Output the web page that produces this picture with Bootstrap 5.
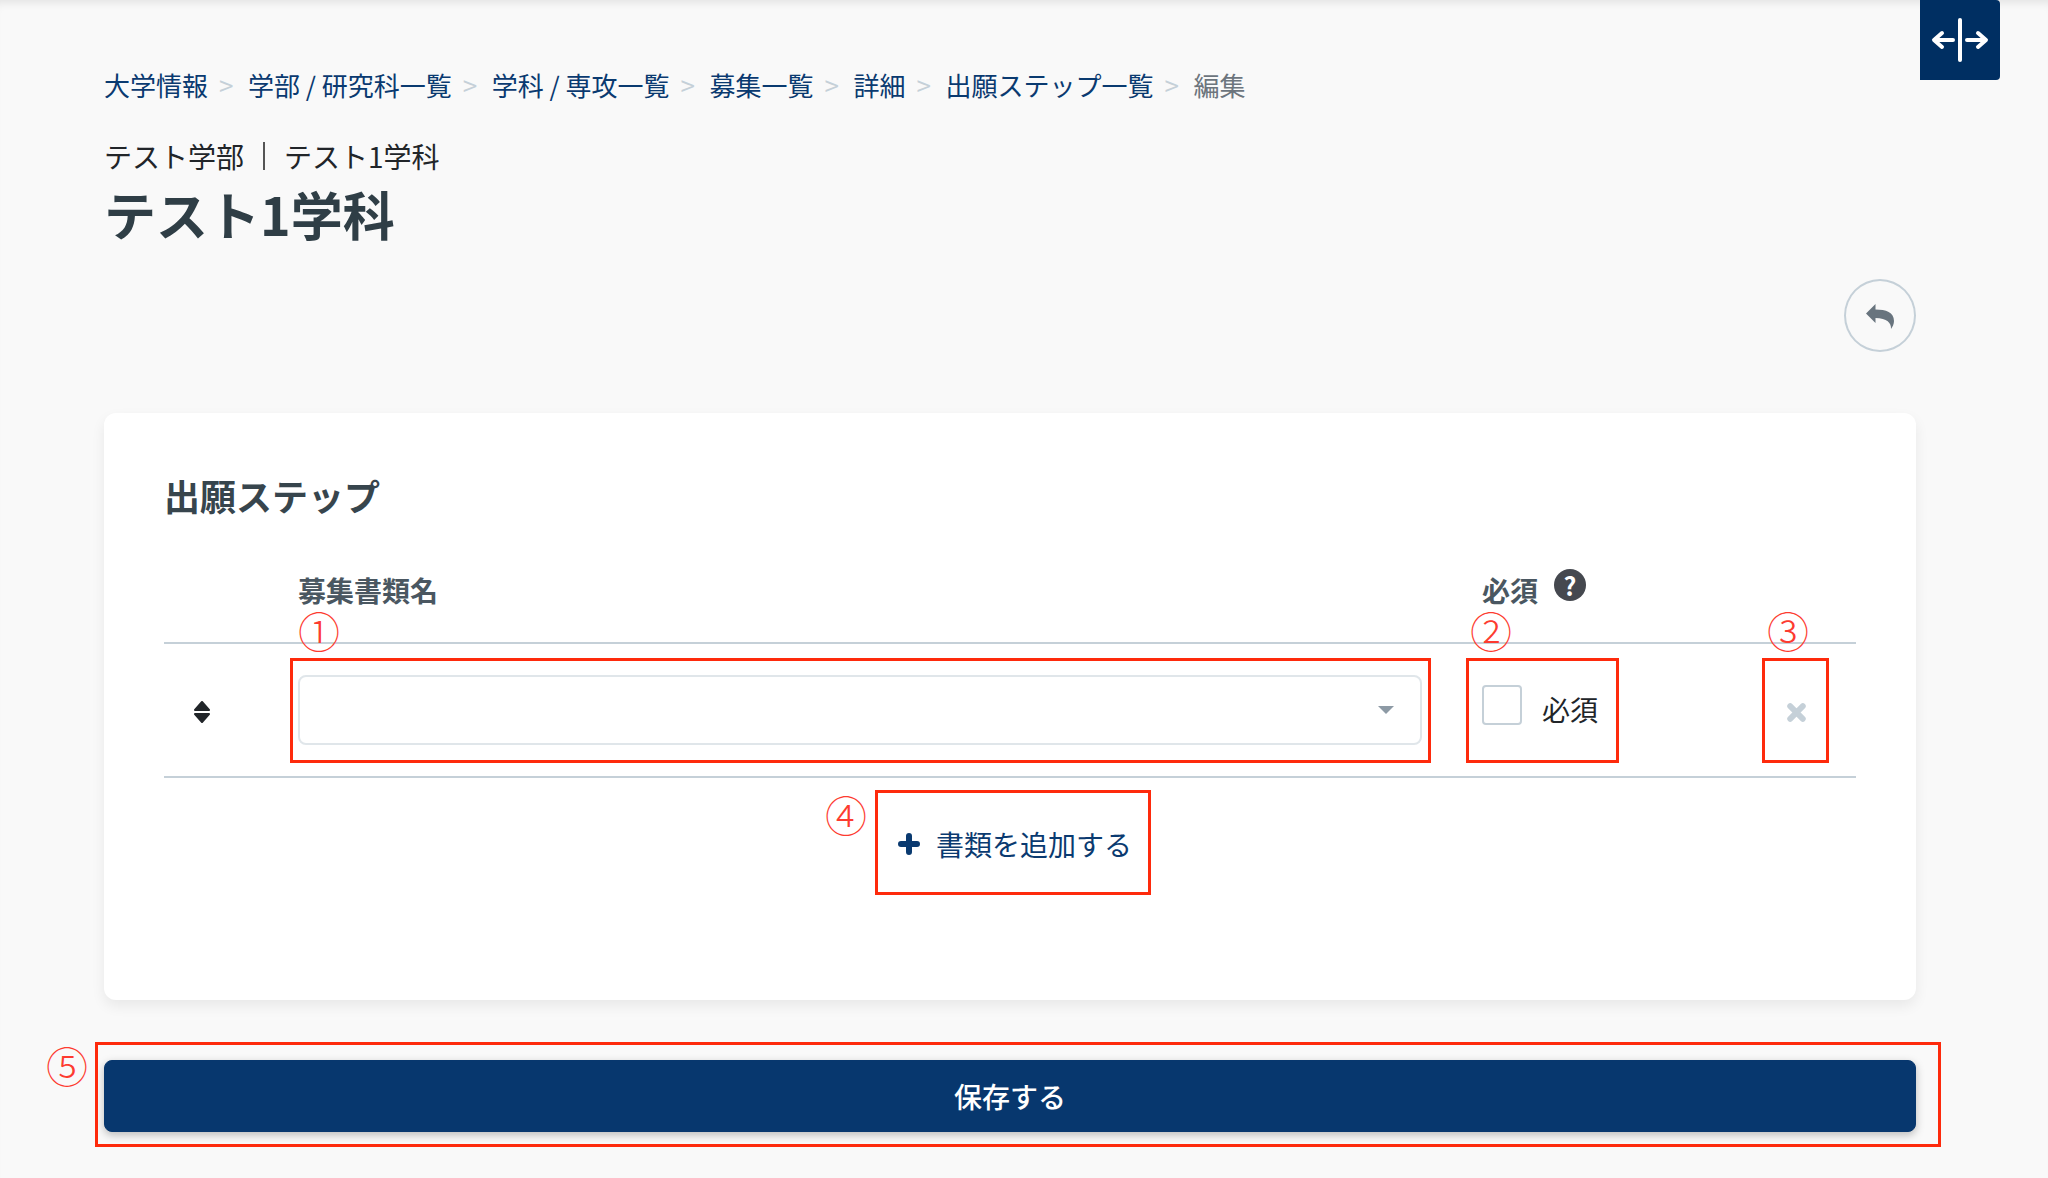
<!DOCTYPE html>
<html lang="ja">
<head>
    <meta charset="UTF-8">
    <meta name="viewport" content="width=device-width, initial-scale=1">
    <title>出願ステップ</title>
    <link href="https://cdn.jsdelivr.net/npm/bootstrap@5.3.0/dist/css/bootstrap.min.css" rel="stylesheet">
    <style>
        body {
            font-family: "Noto Sans CJK JP", "Noto Sans", sans-serif;
            background: #f9f9f9;
            color: #212529;
            box-shadow: inset 0 9px 9px -6px rgba(0, 0, 0, .09);
        }
        .page-wrap { width: 2048px; min-height: 1178px; padding: 66px 132px 46px 104px; }

        /* パンくず */
        .crumbs { --bs-breadcrumb-divider: ">"; --bs-breadcrumb-margin-bottom: 0; --bs-breadcrumb-item-padding-x: 11px; font-size: 26px; line-height: 38px; }
        .crumbs a { color: #0a3a70; text-decoration: none; }
        .crumbs .breadcrumb-item::before { color: #c5d0d8; padding-right: 14.500px; }
        .crumbs .breadcrumb-item.active { color: #6c757d; }

        .sub-line { font-size: 28px; line-height: 38px; margin-top: 33px; }
        .sub-sep { width: 2px; height: 28px; background: #555; margin: 0 19px 0 19px; }
        .main-title { font-size: 52px; font-weight: 700; line-height: 72px; color: #2f3e46; margin: 3px 0 0; }

        .back-btn { width: 72px; height: 73px; border: 2.5px solid #c5d0d8; border-radius: 50%; margin-top: 29px; padding: 0; background: transparent; }

        .step-card { height: 587px; margin-top: 61px; padding: 58px 60px 60px; border: 0; border-radius: 12px; box-shadow: 0 6px 14px rgba(0, 0, 0, .07); }
        .step-title { font-size: 36px; font-weight: 700; line-height: 48px; color: #37454d; margin: 0; }
        .head-row { height: 125px; padding-left: 134px; color: #4a5761; font-size: 28px; font-weight: 700; padding-bottom: 31px; border-bottom: 2px solid #c5d0d8; }
        .head-name { width: 1184px; }
        .help-mark { width: 32px; height: 32px; border-radius: 50%; background: #45484f; color: #fff; font-size: 25px; font-weight: 700; line-height: 32px; text-align: center; margin-left: 16px; margin-bottom: 10px; }
        .doc-row { height: 134px; border-bottom: 2px solid #c5d0d8; }
        .sort-cell { width: 134px; padding: 4px 0 0 30px; }
        .name-cell { width: 1184px; padding-right: 60px; }
        .doc-select {
            height: 70px; border: 2px solid #e0e6ea; border-radius: 8px; background-color: #fff;
            background-size: 16px 8px; background-position: right 26px center;
            background-image: url("data:image/svg+xml,%3Csvg xmlns='http://www.w3.org/2000/svg' viewBox='0 0 16 8'%3E%3Cpath fill='%238d9aa5' d='M0 0h16L8 8z'/%3E%3C/svg%3E");
        }
        .req-box { width: 40px; height: 40px; border: 2px solid #c5d0d8; border-radius: 6px; margin: 0 20px 10px 0; float: none; }
        .req-label { font-size: 28px; line-height: 38px; margin-bottom: 2px; }
        .del-cell { margin-left: auto; padding: 4px 50px 0 0; }
        .add-wrap { margin-top: 46px; padding-left: 734px; }
        .add-btn { color: #0a3a70; font-size: 28px; line-height: 40px; padding: 0; border: 0; background: none; }
        .add-btn svg { margin-right: 16px; }

        .save-btn { height: 72px; margin-top: 60px; background: #07376e; border-color: #07376e; color: #fff; font-size: 28px; font-weight: 500; border-radius: 8px; box-shadow: 0 3px 8px rgba(0, 0, 0, .25); }

        .toggle-btn { position: absolute; top: 0; left: 1920px; width: 80px; height: 80px; background: #002f62; border: 0; border-radius: 0 4px 4px 0; padding: 0; }

        /* 注釈 */
        .note-box { position: absolute; border: 3px solid #fe2a0c; pointer-events: none; }
        .note-num { position: absolute; color: #fd3b30; font-size: 42px; line-height: 42px; width: 42px; text-align: center; font-weight: 300; }
    </style>
</head>
<body>
    <div class="page-wrap position-relative">
        <button class="toggle-btn" type="button" aria-label="toggle">
            <svg width="80" height="80" viewBox="0 0 80 80" fill="none" stroke="#fff" stroke-width="4" stroke-linecap="round" stroke-linejoin="round">
                <path d="M40 20v40"/>
                <path d="M33 40H15M22 33l-8 7 8 7"/>
                <path d="M47 40h18M58 33l8 7-8 7"/>
            </svg>
        </button>

        <nav aria-label="breadcrumb">
            <ol class="breadcrumb crumbs">
                <li class="breadcrumb-item"><a href="#">大学情報</a></li>
                <li class="breadcrumb-item"><a href="#">学部 / 研究科一覧</a></li>
                <li class="breadcrumb-item"><a href="#">学科 / 専攻一覧</a></li>
                <li class="breadcrumb-item"><a href="#">募集一覧</a></li>
                <li class="breadcrumb-item"><a href="#">詳細</a></li>
                <li class="breadcrumb-item"><a href="#">出願ステップ一覧</a></li>
                <li class="breadcrumb-item active" aria-current="page">編集</li>
            </ol>
        </nav>

        <div class="sub-line d-flex align-items-center">
            <span>テスト学部</span><span class="sub-sep"></span><span>テスト1学科</span>
        </div>
        <h1 class="main-title">テスト1学科</h1>

        <div class="d-flex justify-content-end">
            <button class="back-btn d-flex align-items-center justify-content-center" type="button" aria-label="back">
                <svg width="28" height="26" viewBox="0 0 28 26"><path fill="#68747e" d="M0 10.500 9.500 1v5.500C20 6.500 28 9 28 18c0 3-1.500 6-3 8 .5-6-4-11-15.500-11v5z"/></svg>
            </button>
        </div>

        <div class="card step-card">
            <h2 class="step-title">出願ステップ</h2>
            <div class="head-row d-flex align-items-end">
                <div class="head-name">募集書類名</div>
                <div>必須</div>
                <div class="help-mark">?</div>
            </div>
            <div class="doc-row d-flex align-items-center">
                <div class="sort-cell">
                    <svg class="d-block" width="16" height="22" viewBox="0 0 16 22" fill="#212529" stroke="#212529" stroke-width="2" stroke-linejoin="round"><path d="M8 1 15 9H1z"/><path d="M1 13h14l-7 8z"/></svg>
                </div>
                <div class="name-cell">
                    <select class="form-select doc-select" aria-label="募集書類名"><option></option></select>
                </div>
                <div class="d-flex align-items-center">
                    <input class="form-check-input req-box" type="checkbox" id="req1">
                    <label class="req-label" for="req1">必須</label>
                </div>
                <div class="del-cell">
                    <svg class="d-block" width="19" height="19" viewBox="0 0 18 18" stroke="#c5d0d8" stroke-width="5.500" stroke-linecap="round"><path d="M3 3l12 12M15 3 3 15"/></svg>
                </div>
            </div>
            <div class="add-wrap">
                <button class="add-btn d-flex align-items-center" type="button">
                    <svg width="22" height="22" viewBox="0 0 22 22" stroke="#0a3a70" stroke-width="6" stroke-linecap="round"><path d="M11 3v16M3 11h16"/></svg>
                    書類を追加する
                </button>
            </div>
        </div>

        <button class="btn save-btn w-100" type="button">保存する</button>

        <!-- 赤枠と番号 -->
        <div class="note-box" style="left:290px;top:658px;width:1141px;height:105px"></div>
        <div class="note-box" style="left:1466px;top:658px;width:153px;height:105px"></div>
        <div class="note-box" style="left:1762px;top:658px;width:67px;height:105px"></div>
        <div class="note-box" style="left:875px;top:790px;width:276px;height:105px"></div>
        <div class="note-box" style="left:95px;top:1042px;width:1846px;height:105px"></div>
        <span class="note-num" style="left:298px;top:609px">①</span>
        <span class="note-num" style="left:1470px;top:609px">②</span>
        <span class="note-num" style="left:1767px;top:609px">③</span>
        <span class="note-num" style="left:825px;top:793px">④</span>
        <span class="note-num" style="left:46px;top:1044px">⑤</span>
    </div>

    <script src="https://cdn.jsdelivr.net/npm/bootstrap@5.3.0/dist/js/bootstrap.bundle.min.js"></script>
</body>
</html>
